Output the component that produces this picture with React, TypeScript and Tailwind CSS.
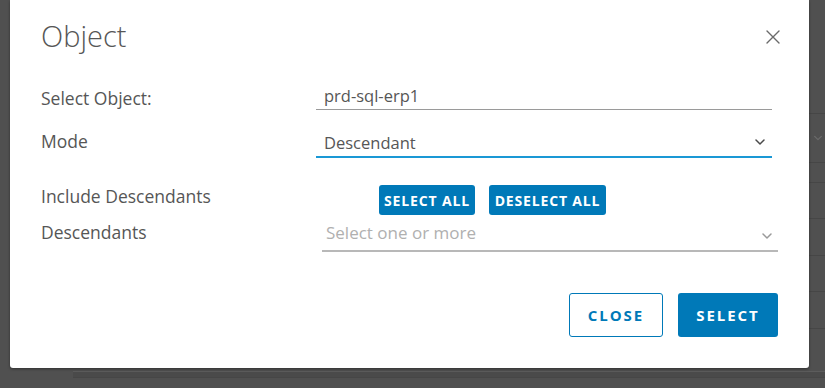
import React from "react";

function XIcon() {
  return (
    <svg width="14" height="14" viewBox="0 0 14 14" fill="none">
      <path d="M1 1L13 13M13 1L1 13" stroke="#6a6a6a" strokeWidth="1.4" strokeLinecap="round" />
    </svg>
  );
}

function Chevron({ color = "#4a4a4a", size = 12 }: { color?: string; size?: number }) {
  return (
    <svg width={size} height={size} viewBox="0 0 12 12" fill="none">
      <path d="M2 4L6 8L10 4" stroke={color} strokeWidth="1.5" strokeLinecap="round" strokeLinejoin="round" />
    </svg>
  );
}

export default function App() {
  const font = { fontFamily: "'Open Sans', Lato, sans-serif" };
  return (
    <div className="relative w-[825px] h-[388px] overflow-hidden bg-[#505050]" style={font}>
      {/* background page content behind the modal */}
      <div className="flex flex-col pt-[113px] pl-[73px]">
        <div className="h-[49px] border-t border-[#464646] flex justify-end items-center pr-[2px]">
          <Chevron color="#6a6a6a" size={10} />
        </div>
        <div className="h-[20px] border-t border-[#464646]" />
        <div className="h-[36px] border-t border-[#464646]" />
        <div className="h-[37px] border-t border-[#464646]" />
        <div className="h-[36px] border-t border-[#464646]" />
        <div className="h-[37px] border-t border-[#464646]" />
        <div className="h-[43px] border-t border-[#464646]" />
        <div className="h-[6px] border-t border-[#5c5c5c] bg-[#4a4a4a]" />
        <div className="h-[20px] border-t border-[#464646]" />
      </div>

      {/* modal */}
      <div className="absolute left-[10px] top-0 w-[799px] h-[368px] bg-white rounded-b-[3px] shadow-[0_1px_3px_rgba(0,0,0,0.4)] flex flex-col">
        <div className="flex items-start justify-between pl-[31px] pr-[29px] h-[82px]">
          <div className="text-[29px] leading-[36px] font-light text-[#565656] mt-[18px]">Object</div>
          <div className="mt-[30px]">
            <XIcon />
          </div>
        </div>

        {/* row 1 */}
        <div className="flex pl-[31px] h-[29px]">
          <div className="w-[275px] text-[17.5px] leading-[30px] text-[#565656] pt-[1px]">Select Object:</div>
          <div className="w-[456px] h-[28px] border-b border-[#9a9a9a] pl-[8px] text-[16.5px] leading-[28px] text-[#565656]">
            prd-sql-erp1
          </div>
        </div>

        {/* row 2 */}
        <div className="flex pl-[31px] mt-[17px] h-[30px]">
          <div className="w-[275px] text-[17.5px] leading-[26px] text-[#565656]">Mode</div>
          <div className="w-[456px] h-[30px] border-b-2 border-[#1a98d5] pl-[8px] pr-[6px] flex items-center justify-between text-[16.5px] text-[#565656]">
            <span className="pt-[2px]">Descendant</span>
            <Chevron />
          </div>
        </div>

        {/* row 3 */}
        <div className="flex pl-[31px] mt-[27px] h-[30px]">
          <div className="w-[338px] text-[17.5px] leading-[22px] text-[#565656]">Include Descendants</div>
          <div className="flex gap-[14px]">
            <button className="h-[30px] w-[96px] rounded-[3px] bg-[#0079b8] text-white text-[14px] font-bold tracking-[0.06em]">
              SELECT ALL
            </button>
            <button className="h-[30px] w-[117px] rounded-[3px] bg-[#0079b8] text-white text-[14px] font-bold tracking-[0.06em]">
              DESELECT ALL
            </button>
          </div>
        </div>

        {/* row 4 */}
        <div className="flex pl-[31px] mt-[3px] h-[34px]">
          <div className="w-[281px] text-[17.5px] leading-[28px] text-[#565656]">Descendants</div>
          <div className="w-[456px] h-[34px] border-b-2 border-[#b8b8b8] pl-[4px] pr-[5px] flex items-start justify-between text-[17px] text-[#b0b0b0]">
            <span className="leading-[30px]">Select one or more</span>
            <div className="mt-[12px]">
              <Chevron color="#9a9a9a" />
            </div>
          </div>
        </div>

        {/* footer */}
        <div className="flex justify-end gap-[15px] pr-[31px] mt-[41px]">
          <button className="h-[44px] w-[94px] rounded-[3px] border border-[#0079b8] bg-white text-[#0079b8] text-[15px] font-bold tracking-[0.13em]">
            CLOSE
          </button>
          <button className="h-[44px] w-[100px] rounded-[3px] bg-[#0079b8] text-white text-[15px] font-bold tracking-[0.13em]">
            SELECT
          </button>
        </div>
      </div>
    </div>
  );
}
